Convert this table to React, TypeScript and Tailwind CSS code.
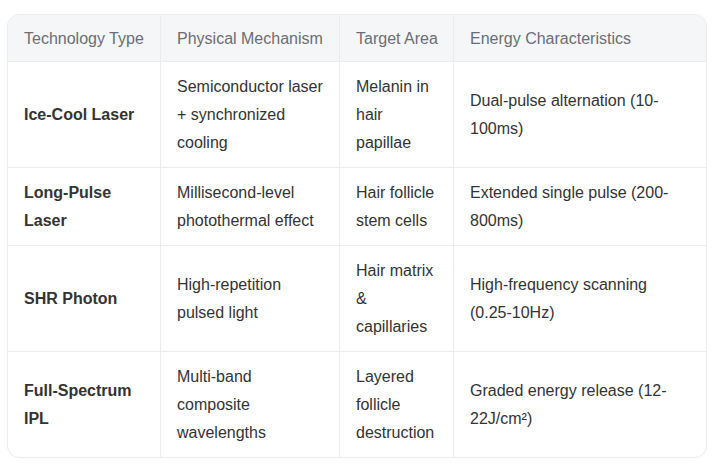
const HEADERS = ['Technology Type', 'Physical Mechanism', 'Target Area', 'Energy Characteristics']

const ROWS: string[][] = [
  ['Ice-Cool Laser', 'Semiconductor laser + synchronized cooling', 'Melanin in hair papillae', 'Dual-pulse alternation (10-100ms)'],
  ['Long-Pulse Laser', 'Millisecond-level photothermal effect', 'Hair follicle stem cells', 'Extended single pulse (200-800ms)'],
  ['SHR Photon', 'High-repetition pulsed light', 'Hair matrix & capillaries', 'High-frequency scanning (0.25-10Hz)'],
  ['Full-Spectrum IPL', 'Multi-band composite wavelengths', 'Layered follicle destruction', 'Graded energy release (12-22J/cm²)'],
]

const COL_WIDTHS = ['w-[153px]', 'w-[179px]', 'w-[114px]', 'w-[252px]']

export default function App() {
  return (
    <div
      className="w-[714px] h-[466px] bg-white pt-[14px] pl-[7px]"
      style={{ fontFamily: '"Liberation Sans", Arial, sans-serif' }}
    >
      <div className="w-[700px] border border-[#ececec] rounded-[12px] overflow-hidden">
        <table className="w-[698px] table-fixed border-separate border-spacing-0 text-[16px] leading-7">
          <colgroup>
            {COL_WIDTHS.map((w, i) => (
              <col key={i} className={w} />
            ))}
          </colgroup>
          <thead>
            <tr className="bg-[#f5f6f8]">
              {HEADERS.map((h, i) => (
                <th
                  key={h}
                  className={
                    'h-[47px] px-4 pt-[2px] pb-0 whitespace-nowrap text-left font-normal text-[#6b6e75] border-b border-[#ececec] align-middle' +
                    (i < HEADERS.length - 1 ? ' border-r' : '')
                  }
                >
                  {h}
                </th>
              ))}
            </tr>
          </thead>
          <tbody>
            {ROWS.map((row, r) => (
              <tr key={r}>
                {row.map((cell, c) => (
                  <td
                    key={c}
                    className={
                      'px-4 py-[10.5px] align-middle text-[#333333] border-[#ececec]' +
                      (c === 0 ? ' font-bold' : '') +
                      (c < row.length - 1 ? ' border-r' : '') +
                      (r < ROWS.length - 1 ? ' border-b' : '')
                    }
                  >
                    {cell}
                  </td>
                ))}
              </tr>
            ))}
          </tbody>
        </table>
      </div>
    </div>
  )
}
